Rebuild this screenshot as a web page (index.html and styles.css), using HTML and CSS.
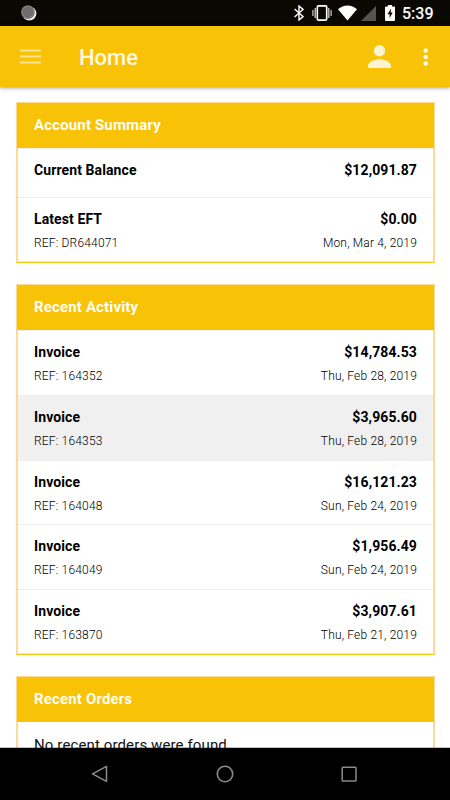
FILE: index.html
```html
<!DOCTYPE html>
<html lang="en">
<head>
  <meta charset="UTF-8">
  <title>Home</title>
  <meta name="viewport" content="width=device-width, initial-scale=1.0">
  <link rel="stylesheet" href="styles.css">
</head>
<body>
  <div class="status-bar">
    <svg class="status-sync" width="16" height="16" viewBox="0 0 16 16">
      <circle cx="8.3" cy="8.5" r="7.1" fill="#eee"/>
      <circle cx="6.9" cy="7.1" r="6.9" fill="#6c6c6c"/>
      <circle cx="6.9" cy="7.1" r="5.8" fill="none" stroke="#a5a5a5" stroke-width="1" stroke-dasharray="1 1.3"/>
    </svg>
    <svg width="10" height="16" viewBox="0 0 10 16" fill="none" stroke="#fff" stroke-width="1.4">
      <path d="M0.6 4 L9 11.6 L5 15 V1 L9 4.4 L0.6 12"/>
    </svg>
    <svg class="status-vibrate" width="20" height="16" viewBox="0 0 20 16" fill="none" stroke="#fff">
      <rect x="5.3" y="0.9" width="9.4" height="14.2" rx="1" stroke-width="1.6"/>
      <path d="M3.2 3v10M16.8 3v10" stroke="#ccc" stroke-width="1.3"/>
      <path d="M0.9 5v6M19.1 5v6" stroke="#ccc" stroke-width="1.2"/>
    </svg>
    <svg class="status-wifi" width="19" height="16" viewBox="0 0 19 16">
      <path d="M0 4.2C5.3-0.9 13.7-0.9 19 4.2L9.5 15.6z" fill="#fff"/>
    </svg>
    <svg class="status-signal" width="15" height="15" viewBox="0 0 15 15">
      <path d="M15 0v15H0z" fill="#55534e"/>
    </svg>
    <svg class="status-battery" width="10" height="16" viewBox="0 0 10 16">
      <path d="M3 0h4v1.5h2q1 0 1 1V15q0 1-1 1H1q-1 0-1-1V2.500q0-1 1-1h2z" fill="#fff"/>
      <path d="M6 3.600L2.500 9.300h2.100v4L7.700 7.600H5.700z" fill="#0a0803"/>
    </svg>
    <span class="status-time">5:39</span>
  </div>

  <header class="toolbar">
    <svg class="menu-icon" width="21" height="15" viewBox="0 0 21 15">
      <path d="M0 1.500h21M0 7.500h21M0 13.500h21" stroke="#fde391" stroke-width="2.200"/>
    </svg>
    <h1>Home</h1>
    <svg class="user-icon" width="23" height="23" viewBox="0 0 23 23" fill="#fef3ce">
      <circle cx="11.5" cy="5.700" r="5.700"/>
      <path d="M0 23v-2.800C1 16.500 6.500 14.200 11.500 14.200S22 16.500 23 20.200V23z"/>
    </svg>
    <svg class="more-icon" width="5" height="18" viewBox="0 0 5 18" fill="#fffbe9">
      <circle cx="2.700" cy="2.500" r="2.300"/>
      <circle cx="2.700" cy="9" r="2.300"/>
      <circle cx="2.700" cy="15.500" r="2.300"/>
    </svg>
  </header>

  <main class="content">
    <section class="card">
      <h2>Account Summary</h2>
      <div class="row row-single">
        <div class="line"><strong>Current Balance</strong><strong>$12,091.87</strong></div>
      </div>
      <div class="row">
        <div class="line"><strong>Latest EFT</strong><strong>$0.00</strong></div>
        <div class="line detail"><span>REF: DR644071</span><span>Mon, Mar 4, 2019</span></div>
      </div>
    </section>

    <section class="card">
      <h2>Recent Activity</h2>
      <div class="row">
        <div class="line"><strong>Invoice</strong><strong>$14,784.53</strong></div>
        <div class="line detail"><span>REF: 164352</span><span>Thu, Feb 28, 2019</span></div>
      </div>
      <div class="row active">
        <div class="line"><strong>Invoice</strong><strong>$3,965.60</strong></div>
        <div class="line detail"><span>REF: 164353</span><span>Thu, Feb 28, 2019</span></div>
      </div>
      <div class="row">
        <div class="line"><strong>Invoice</strong><strong>$16,121.23</strong></div>
        <div class="line detail"><span>REF: 164048</span><span>Sun, Feb 24, 2019</span></div>
      </div>
      <div class="row">
        <div class="line"><strong>Invoice</strong><strong>$1,956.49</strong></div>
        <div class="line detail"><span>REF: 164049</span><span>Sun, Feb 24, 2019</span></div>
      </div>
      <div class="row">
        <div class="line"><strong>Invoice</strong><strong>$3,907.61</strong></div>
        <div class="line detail"><span>REF: 163870</span><span>Thu, Feb 21, 2019</span></div>
      </div>
    </section>

    <section class="card">
      <h2>Recent Orders</h2>
      <p class="empty">No recent orders were found.</p>
    </section>
  </main>

  <nav class="nav-bar">
    <svg width="18" height="18" viewBox="0 0 18 18" fill="none" stroke="#8b8b8b" stroke-width="1.500" stroke-linejoin="round">
      <path d="M15.500 1.300v15L1.500 8.800z"/>
    </svg>
    <svg width="18" height="18" viewBox="0 0 18 18" fill="none" stroke="#8b8b8b" stroke-width="1.600">
      <circle cx="9" cy="9" r="7.700"/>
    </svg>
    <svg width="18" height="18" viewBox="0 0 18 18" fill="none" stroke="#8b8b8b" stroke-width="1.500">
      <rect x="2.200" y="2.200" width="13.800" height="13.800" rx="0.800"/>
    </svg>
  </nav>
</body>
</html>
```
FILE: styles.css
```css
:root {
  --yellow: #f8c207;
  --border: #fddb94;
}

* {
  box-sizing: border-box;
}

body {
  margin: 0;
  height: 800px;
  display: flex;
  flex-direction: column;
  overflow: hidden;
  background: #fff;
  color: #111;
  font-family: Roboto, "Liberation Sans", sans-serif;
}

/* Android status bar */
.status-bar {
  flex: none;
  height: 26px;
  padding: 0 17px 0 21px;
  display: flex;
  align-items: center;
  background: #0a0803;
}

.status-sync {
  margin-right: auto;
}

.status-vibrate {
  margin-left: 8px;
}

.status-wifi {
  margin-left: 6px;
}

.status-signal {
  margin-left: 4px;
}

.status-battery {
  margin-left: 9px;
}

.status-time {
  width: 31px;
  margin-left: 7px;
  padding-top: 2px;
  color: #fff;
  font-size: 16px;
  font-weight: 500;
  line-height: 20px;
  white-space: nowrap;
}

/* Toolbar */
.toolbar {
  flex: none;
  position: relative;
  height: 61px;
  padding: 0 22px 0 20px;
  display: flex;
  align-items: center;
  background: var(--yellow);
  box-shadow: 0 1px 4px rgba(0, 0, 0, 0.4);
}

.toolbar h1 {
  margin: 3px auto 0 38px;
  color: #fff8e1;
  font-size: 22px;
  font-weight: 500;
  line-height: 26px;
}

.more-icon {
  margin-left: 32px;
}

/* Cards */
.content {
  flex: 1;
  min-height: 0;
  padding: 15px 15px 0 16px;
  display: flex;
  flex-direction: column;
  gap: 21px;
  overflow: hidden;
}

.card {
  flex: none;
  border: 1px solid var(--border);
  border-width: 1px 2px;
  border-bottom-color: var(--yellow);
}

.card h2 {
  margin: 0 -1px;
  height: 45px;
  padding-left: 17px;
  background: var(--yellow);
  color: #fffdf5;
  font-size: 15px;
  font-weight: 700;
  letter-spacing: 0.15px;
  line-height: 45px;
}

.row {
  height: 64.8px;
  padding: 10px 16px 0;
  border-top: 1px solid #eee;
}

.row:last-child {
  height: 65px;
  border-bottom: 1px solid #fdebc4;
}

.row-single {
  height: 49px;
}

.row.active {
  background: #f0f0f0;
}

.line {
  display: flex;
  justify-content: space-between;
  line-height: 22px;
}

.line strong {
  color: #000;
  font-size: 14px;
  font-weight: 700;
  letter-spacing: 0.1px;
}

.detail {
  padding-top: 2px;
  color: #000;
  font-size: 12px;
  font-weight: 300;
  letter-spacing: 0.18px;
}

.empty {
  margin: 0;
  padding: 11px 16px 20px;
  font-size: 15px;
  letter-spacing: 0.12px;
  line-height: 24px;
}

/* Android navigation buttons */
.nav-bar {
  flex: none;
  position: relative;
  height: 52px;
  padding: 0 92px 0 91px;
  display: flex;
  align-items: center;
  justify-content: space-between;
  background: #000;
  box-shadow: 0 -1px 0 rgba(0, 0, 0, 0.25);
}
```
